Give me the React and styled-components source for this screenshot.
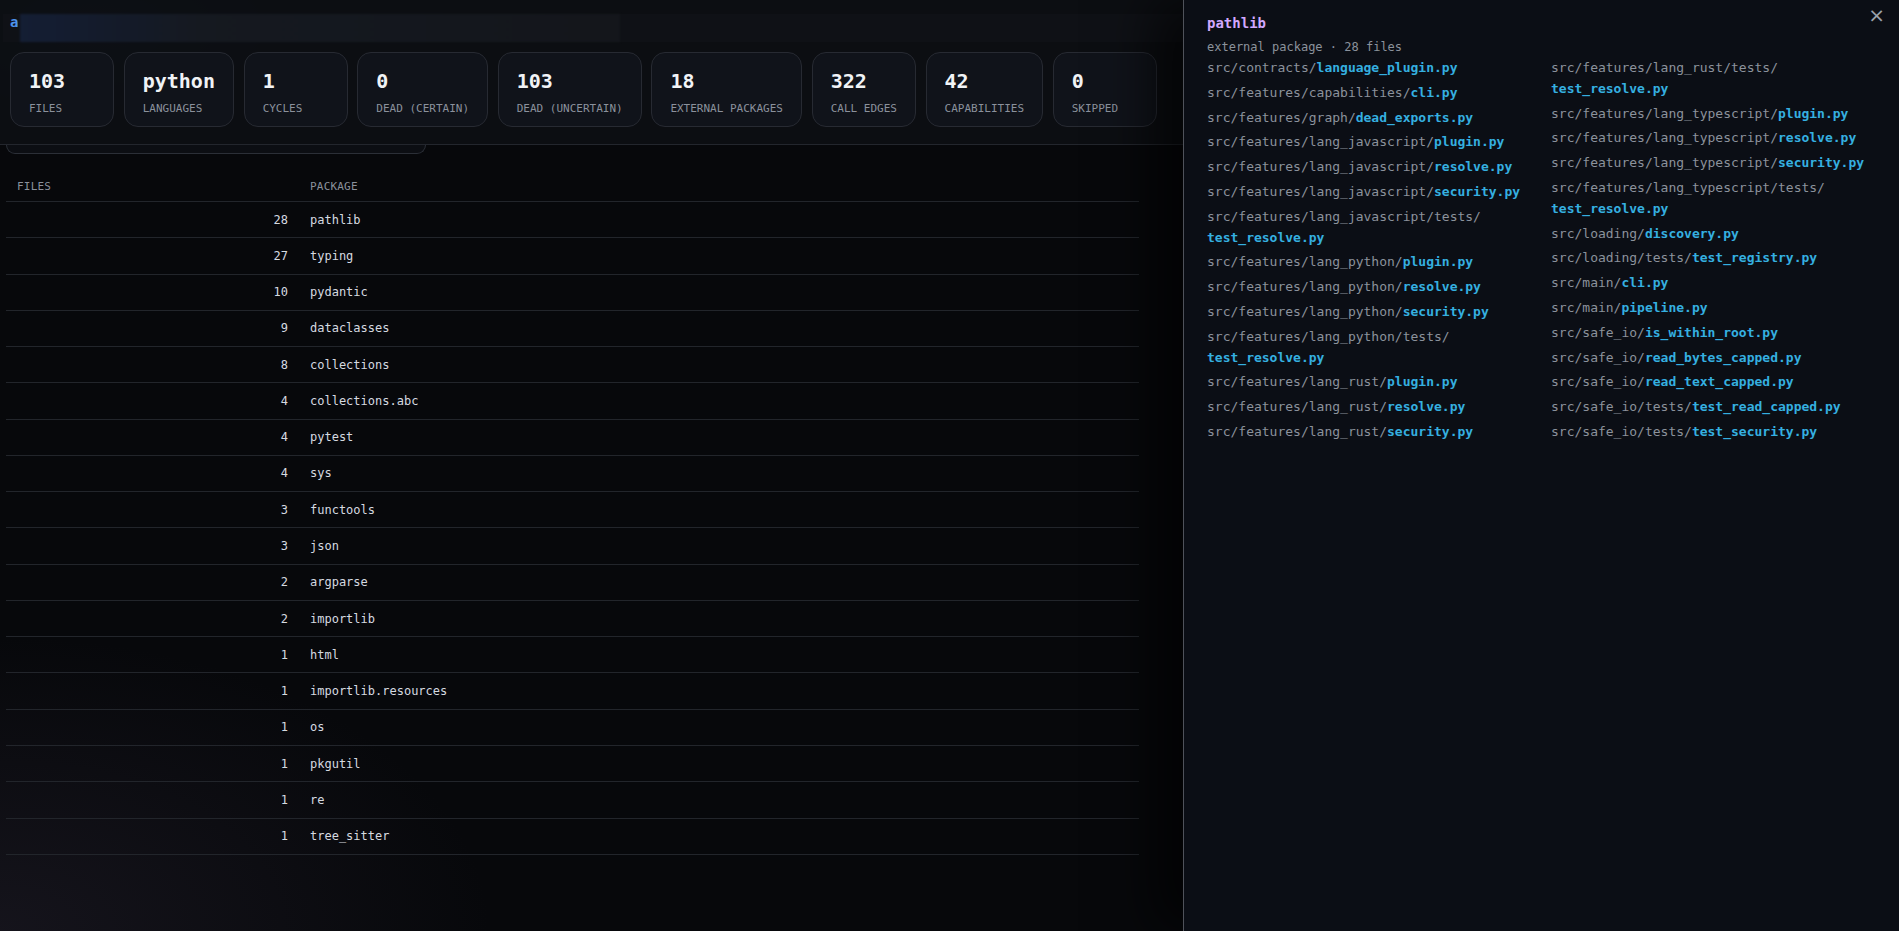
import React from "react";
import styled, { createGlobalStyle } from "styled-components";

const Global = createGlobalStyle`
  html, body { margin: 0; padding: 0; background: #07080b; }
  body { font-family: "DejaVu Sans Mono", "Liberation Mono", monospace; color: #d6dae0; overflow: hidden; }
  * { box-sizing: border-box; }
`;

const Page = styled.div`
  display: flex;
  width: 100vw;
  height: 100vh;
  overflow: hidden;
`;

const Main = styled.main`
  flex: 1;
  min-width: 0;
  position: relative;
  background:
    radial-gradient(ellipse 260px 120px at 90px 28px, rgba(40, 70, 120, 0.22), transparent 70%),
    radial-gradient(ellipse 700px 420px at 0px 931px, rgba(38, 34, 48, 0.45), transparent 70%),
    #07080b;
`;

const Header = styled.header`
  background: rgba(13, 15, 20, 0.92);
  border-bottom: 1px solid #23262d;
  padding: 14px 0 17px 10px;
`;

const TitleRow = styled.div`
  display: flex;
  align-items: flex-start;
  height: 28px;
  margin-left: -7px;
  margin-bottom: 10px;
  background: #0f1116;
`;

const TitleGlyph = styled.span`
  color: #4d92ea;
  font-size: 14px;
  font-weight: bold;
  width: 10px;
  margin-top: 1px;
  margin-left: 7px;
  line-height: 14px;
`;

const TitleBlur = styled.div`
  width: 600px;
  height: 28px;
  background: linear-gradient(90deg, #152038 0%, #161a22 30%, #15171c 100%);
  filter: blur(1.2px);
  opacity: 0.9;
`;

const Stats = styled.div`
  display: flex;
  gap: 9.7px;
`;

const Card = styled.div`
  min-width: 104px;
  height: 75px;
  padding: 16px 18px 0;
  border: 1px solid #272a32;
  border-radius: 14px;
  background: #10131a;
  display: flex;
  flex-direction: column;
`;

const Value = styled.div`
  font-size: 20px;
  font-weight: bold;
  color: #f1f3f6;
  line-height: 24px;
`;

const Label = styled.div`
  margin-top: 9px;
  font-size: 11px;
  line-height: 14px;
  color: #8b919c;
  text-transform: uppercase;
  white-space: nowrap;
`;

const SearchRemnant = styled.div`
  margin-left: 6px;
  width: 420px;
  height: 9px;
  border: 1px solid #2b2f37;
  border-top: none;
  border-radius: 0 0 10px 10px;
  background: #0c0e13;
`;

const Table = styled.div`
  margin: 17px 44px 0 6px;
  font-size: 12px;
`;

const Row = styled.div`
  display: grid;
  grid-template-columns: 293px 1fr;
  align-items: center;
  height: ${(p) => (p.$head ? "31px" : "36.28px")};
  border-bottom: 1px solid #22252b;
`;

const HeadCell = styled.div`
  padding: 0 11px;
  font-size: 11px;
  color: #8b919c;
  text-transform: uppercase;
  letter-spacing: 0.2px;
`;

const Num = styled.div`
  padding: 0 11px;
  text-align: right;
  color: #d6dae0;
`;

const Pkg = styled.div`
  padding: 0 11px;
  color: #d6dae0;
`;

const Drawer = styled.aside`
  width: 716px;
  flex: none;
  position: relative;
  z-index: 2;
  background: #0b0e15;
  border-left: 1px solid #4f525a;
  box-shadow: -30px 0 50px rgba(0, 0, 0, 0.65);
  padding: 13px 24px 13px 23px;
`;

const Close = styled.button`
  position: absolute;
  top: 4px;
  right: 14px;
  background: none;
  border: none;
  color: #9ba1ab;
  font-size: 20px;
  font-family: "DejaVu Sans", sans-serif;
  cursor: pointer;
  padding: 0;
  line-height: 22px;
`;

const DrawerTitle = styled.h2`
  margin: 0;
  font-size: 14px;
  line-height: 21px;
  font-weight: bold;
  color: #d2a8ff;
`;

const Sub = styled.div`
  margin-top: 3.5px;
  font-size: 12px;
  line-height: 18px;
  color: #8b929c;
`;

const FileList = styled.div`
  margin-top: 2.5px;
  column-count: 2;
  column-gap: 20px;
  font-size: 13px;
  line-height: 20.8px;
`;

const FileItem = styled.div`
  break-inside: avoid;
  padding-bottom: 4px;
`;

const Dir = styled.span`
  color: #8b929c;
`;

const FileName = styled.span`
  color: #35b0e0;
  font-weight: bold;
`;

const stats = [
  ["103", "Files"],
  ["python", "Languages"],
  ["1", "Cycles"],
  ["0", "Dead (certain)"],
  ["103", "Dead (uncertain)"],
  ["18", "External packages"],
  ["322", "Call edges"],
  ["42", "Capabilities"],
  ["0", "Skipped"],
];

const packages = [
  [28, "pathlib"],
  [27, "typing"],
  [10, "pydantic"],
  [9, "dataclasses"],
  [8, "collections"],
  [4, "collections.abc"],
  [4, "pytest"],
  [4, "sys"],
  [3, "functools"],
  [3, "json"],
  [2, "argparse"],
  [2, "importlib"],
  [1, "html"],
  [1, "importlib.resources"],
  [1, "os"],
  [1, "pkgutil"],
  [1, "re"],
  [1, "tree_sitter"],
];

const files = [
  "src/contracts/language_plugin.py",
  "src/features/capabilities/cli.py",
  "src/features/graph/dead_exports.py",
  "src/features/lang_javascript/plugin.py",
  "src/features/lang_javascript/resolve.py",
  "src/features/lang_javascript/security.py",
  "src/features/lang_javascript/tests/test_resolve.py",
  "src/features/lang_python/plugin.py",
  "src/features/lang_python/resolve.py",
  "src/features/lang_python/security.py",
  "src/features/lang_python/tests/test_resolve.py",
  "src/features/lang_rust/plugin.py",
  "src/features/lang_rust/resolve.py",
  "src/features/lang_rust/security.py",
  "src/features/lang_rust/tests/test_resolve.py",
  "src/features/lang_typescript/plugin.py",
  "src/features/lang_typescript/resolve.py",
  "src/features/lang_typescript/security.py",
  "src/features/lang_typescript/tests/test_resolve.py",
  "src/loading/discovery.py",
  "src/loading/tests/test_registry.py",
  "src/main/cli.py",
  "src/main/pipeline.py",
  "src/safe_io/is_within_root.py",
  "src/safe_io/read_bytes_capped.py",
  "src/safe_io/read_text_capped.py",
  "src/safe_io/tests/test_read_capped.py",
  "src/safe_io/tests/test_security.py",
];

export default function App() {
  return (
    <Page>
      <Global />
      <Main>
        <Header>
          <TitleRow>
            <TitleGlyph>a</TitleGlyph>
            <TitleBlur />
          </TitleRow>
          <Stats>
            {stats.map(([v, l]) => (
              <Card key={l}>
                <Value>{v}</Value>
                <Label>{l}</Label>
              </Card>
            ))}
          </Stats>
        </Header>
        <SearchRemnant />
        <Table>
          <Row $head>
            <HeadCell>Files</HeadCell>
            <HeadCell>Package</HeadCell>
          </Row>
          {packages.map(([n, p]) => (
            <Row key={p}>
              <Num>{n}</Num>
              <Pkg>{p}</Pkg>
            </Row>
          ))}
        </Table>
      </Main>
      <Drawer>
        <Close aria-label="Close">×</Close>
        <DrawerTitle>pathlib</DrawerTitle>
        <Sub>external package · 28 files</Sub>
        <FileList>
          {files.map((f) => {
            const i = f.lastIndexOf("/") + 1;
            return (
              <FileItem key={f}>
                <Dir>{f.slice(0, i)}</Dir>
                <wbr />
                <FileName>{f.slice(i)}</FileName>
              </FileItem>
            );
          })}
        </FileList>
      </Drawer>
    </Page>
  );
}
